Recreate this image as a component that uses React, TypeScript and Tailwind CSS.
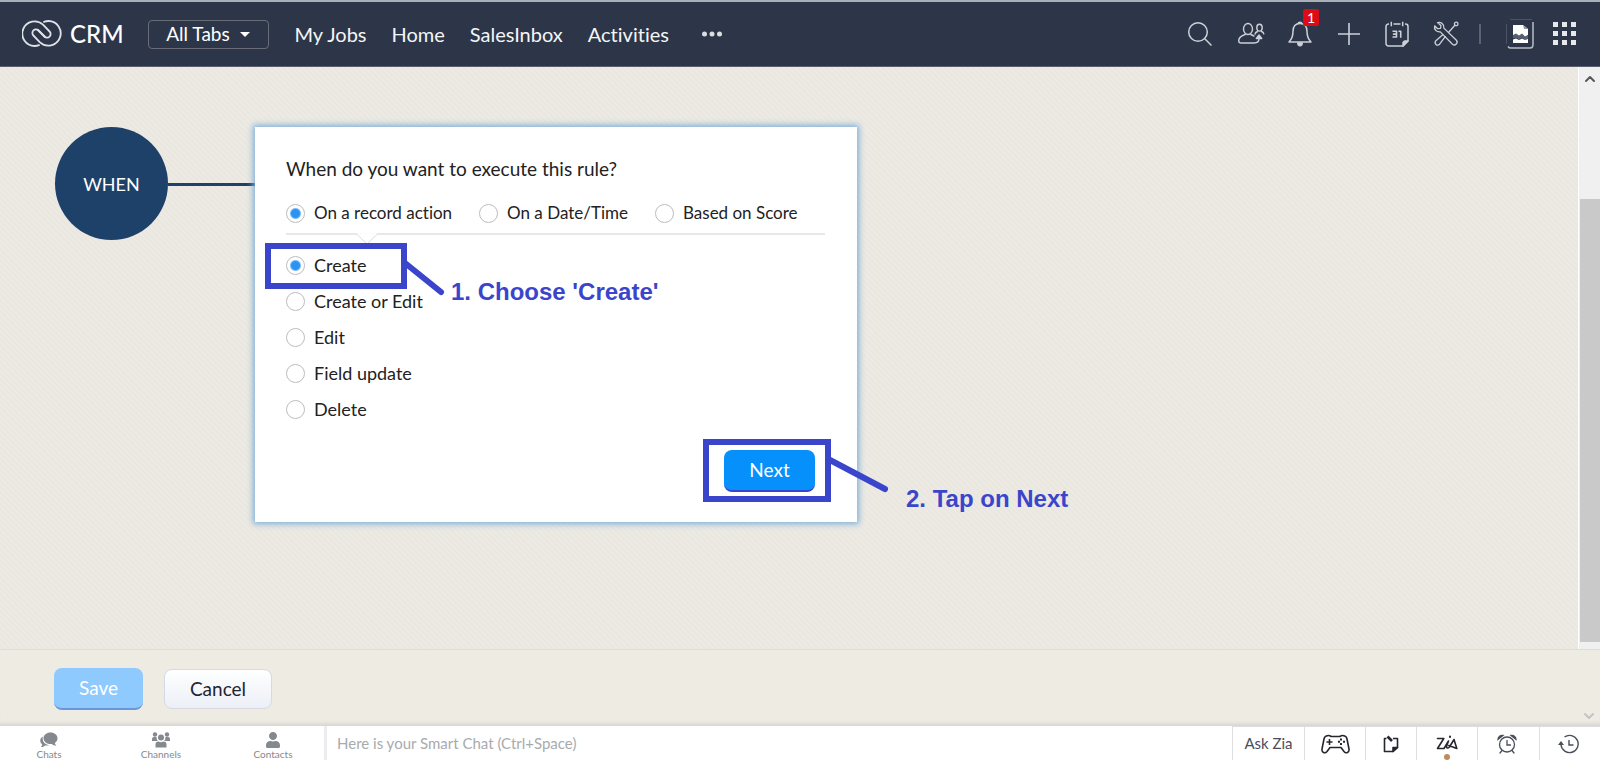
import React, { useState } from 'react';
import { FaUser } from 'react-icons/fa';
import { ChevronDown, ChevronUp } from 'lucide-react';

const NAV_LINKS = ['My Jobs', 'Home', 'SalesInbox', 'Activities'];
const TRIGGERS = ['On a record action', 'On a Date/Time', 'Based on Score'];
const ACTIONS = ['Create', 'Create or Edit', 'Edit', 'Field update', 'Delete'];

interface RadioProps {
  name: string;
  label: string;
  checked: boolean;
  onChange: () => void;
}

const Radio: React.FC<RadioProps> = ({ name, label, checked, onChange }) => (
  <label className="flex h-6 items-center gap-[9px] whitespace-nowrap text-[#222]">
    <input
      type="radio"
      name={name}
      checked={checked}
      onChange={onChange}
      className="size-[19px] shrink-0 appearance-none rounded-full border border-[#bdbdbd] bg-white checked:bg-[radial-gradient(circle,#2a94f4_0_4px,#7fbff8_5px,transparent_6px)]"
    />
    {label}
  </label>
);

const Logo = () => (
  <svg width="40" height="28" viewBox="0 0 40 28" fill="none" stroke="#dfe1e6" strokeWidth="1.8" strokeLinecap="round">
    <path d="M17 25.200C15.500 25.800 14 26 12.500 26A12.300 12.300 0 1 1 21 4.700L27.600 11.500A3.500 3.500 0 0 1 22.500 16.500L16 10" />
    <path d="M17 25.200C15.500 25.800 14 26 12.500 26A12.300 12.300 0 1 1 21 4.700L27.600 11.500A3.500 3.500 0 0 1 22.500 16.500L16 10" transform="rotate(180 19.500 13.500)" />
  </svg>
);

const SearchIcon = () => (
  <svg width="26" height="26" viewBox="0 0 26 26" fill="none" stroke="currentColor" strokeWidth="1.500">
    <circle cx="11" cy="11" r="9.300" />
    <path d="M17.800 17.800L24.500 24.500" />
  </svg>
);

const PeopleIcon = () => (
  <svg width="28" height="24" viewBox="0 0 28 24" fill="none" stroke="currentColor" strokeWidth="1.400" strokeLinecap="round" strokeLinejoin="round">
    <ellipse cx="11" cy="7" rx="4.500" ry="5.500" />
    <path d="M8.200 12.500c-4 1.200-6.300 2.600-6.500 6.200 0 1.500 1 2.300 2.500 2.300h13c2.500 0 4.800-1.500 4.800-4.500M13.800 12.500l3.200 1.500" />
    <ellipse cx="22.500" cy="5.700" rx="2.700" ry="3.400" />
    <path d="M20.500 9.500c-1.500.6-2.300 1.400-2.500 2.600M24.500 9.500c1.200.4 2 .9 2.300 2.300" />
    <path d="M19.300 16.500l2.700-3.500 2.700 3.500z" fill="currentColor" />
  </svg>
);

const BellIcon = () => (
  <svg width="26" height="26" viewBox="0 0 26 26" fill="none" stroke="currentColor" strokeWidth="1.500" strokeLinejoin="round">
    <path d="M13 2.500c-4.700 0-7 3.500-7 8 0 5.500-1.500 8-4 10.500h22c-2.500-2.500-4-5-4-10.500 0-4.500-2.300-8-7-8z" />
    <path d="M11.200 2.800c0-2 3.600-2 3.600 0" />
    <path d="M10.800 22h4.400c0 3.500-4.400 3.500-4.400 0z" fill="currentColor" />
  </svg>
);

const PlusIcon = () => (
  <svg width="24" height="24" viewBox="0 0 24 24" stroke="currentColor" strokeWidth="1.600">
    <path d="M1 12h22M12 1v22" />
  </svg>
);

const CalendarIcon = () => (
  <svg width="24" height="26" viewBox="0 0 24 26" fill="none" stroke="currentColor" strokeWidth="1.500" strokeLinejoin="round">
    <path d="M4 3H3.500A2.500 2.500 0 0 0 1 5.500v17A2.500 2.500 0 0 0 3.500 25H18l5-5V5.500A2.500 2.500 0 0 0 20.500 3H20M8.500 3h7M6.300.8v4.400M17.700.8v4.400" />
    <path d="M18 25v-3.500l1.500-1.500H23z" fill="currentColor" />
    <path d="M7.500 10.300h4v2.800H8.500h3v2.900h-4M13.500 10.300h2.200v6.500" strokeWidth="1.600" />
  </svg>
);

const ToolsIcon = () => (
  <svg width="26" height="26" viewBox="0 0 26 26" fill="none" stroke="currentColor" strokeWidth="1.300" strokeLinejoin="round" strokeLinecap="round">
    <path d="M4.500 1.600c3.400-1 6.900 1.400 6.400 5.500l12.500 12.200c2.200 2.500-1.300 6.100-3.900 3.900L7.300 10.900C3.500 11.400.8 8.300 1.600 4.800l3 2.900 2.900-.4.500-2.800z" />
    <path d="M12.200 15.600l-5.600 7.600c-2.400 2.600-6-.8-3.700-3.500l6.800-6M15.500 11.500l6.400-7.200" />
    <circle cx="23.200" cy="3" r="1.800" />
  </svg>
);

const AvatarIcon = () => (
  <svg width="32" height="32" viewBox="0 0 32 32" fill="none">
    <path d="M5 1.500h22M1.500 6v20" stroke="#4b5364" />
    <path d="M3 28.500q1 1.500 3 1.500h19q3 0 3-3.500V4" stroke="#b9bdc5" strokeWidth="1.500" />
    <path d="M8 7h10l5 4v6l-3 2-3-3-3 3-3-2-3 1z" fill="#fff" />
    <path d="M18 7l1 4h4z" fill="#8e95a3" />
    <path d="M8 17l3-1.500 3 2 3-2 3 3 3-1.500v4l-3 1-3-2.500-3 2-3-2-3 1z" fill="#59606e" />
    <path d="M8 21.500l3-1 3 1.500 3-1.500 3 1.500 3-1V25H8z" fill="#fff" />
  </svg>
);

const AppsIcon = () => (
  <svg width="24" height="24" viewBox="0 0 24 24" fill="#e6e8eb">
    {[0, 9, 18].map(y => [0, 9, 18].map(x => <rect key={`${x}-${y}`} x={x} y={y} width="5" height="5" />))}
  </svg>
);

const ChatsIcon = () => (
  <svg width="18" height="16" viewBox="0 0 18 16" fill="currentColor">
    <path d="M10.500.5c4 0 7 2.500 7 5.800 0 2-1 3.700-2.700 4.700.2 1.200.8 2 1.700 2.800-2 0-3.500-.6-4.600-1.700-4.800.3-8.400-2.200-8.400-5.800C3.500 3 6.500.5 10.500.5z" />
    <path d="M2.700 4.500C.9 5.800 0 7.300.3 9.200c.2 1.300.9 2.300 1.900 3-.1 1.200-.5 2-1.200 2.800 1.700 0 3-.6 3.900-1.600 1.800.4 3.600.2 5-.3C5.500 13 2 10.200 2.700 4.500z" />
  </svg>
);

const ChannelsIcon = () => (
  <svg width="18" height="16" viewBox="0 0 18 16" fill="currentColor">
    <circle cx="3" cy="2.500" r="2.200" />
    <circle cx="15" cy="2.500" r="2.200" />
    <circle cx="9" cy="5.500" r="3" />
    <path d="M0 9V7q0-2 2-2h2.500q0 3 1.500 4zM18 9V7q0-2-2-2h-2.500q0 3-1.500 4zM3.500 15.500v-3q0-3 3-3 2.500 1.300 5 0 3 0 3 3v3z" />
  </svg>
);

const GamepadIcon = () => (
  <svg width="29" height="20" viewBox="0 0 29 20" fill="none" stroke="#26262e" strokeWidth="1.600" strokeLinejoin="round">
    <path d="M8 1.500c-3 0-4.500 1-5 3.500L1 15c-.5 3.500 3 5 5 2.500l3-4h11l3 4c2 2.500 5.500 1 5-2.500L26 5c-.5-2.500-2-3.500-5-3.500-1 0-1.500 1-2.500 1h-8c-1 0-1.500-1-2.500-1z" />
    <path d="M5.500 8h6M8.500 5v6" />
    <path d="M20 4.500v2M20 9v2M17 7.700h2M22 7.700h2" strokeWidth="2" />
  </svg>
);

const NoteIcon = () => (
  <svg width="16" height="18" viewBox="0 0 16 18" fill="none" stroke="#26262e" strokeWidth="1.600" strokeLinejoin="round">
    <path d="M3.500 3.500H1.500v13h8.500l4.500-4v-9H10" />
    <path d="M10 16.500v-4h4.500z" fill="#26262e" />
    <path d="M4.500 1.500L9 6" strokeWidth="2.600" />
  </svg>
);

const ZiaIcon = () => (
  <svg width="22" height="17" viewBox="0 0 22 17" fill="none" stroke="#26262e" strokeWidth="1.600" strokeLinecap="round" strokeLinejoin="round">
    <path d="M1.500 3.500h6.300L1.500 13.500h6.500L12.500 6l-2 5.500c0 2 1.500 2 3 .5l4.500-7.500 2.800 9-8-3" />
    <path d="M14 1.500v.5" strokeWidth="2" />
  </svg>
);

const AlarmIcon = () => (
  <svg width="20" height="20" viewBox="0 0 20 20" fill="none" stroke="#4a4e5a" strokeWidth="1.300" strokeLinecap="round">
    <circle cx="10" cy="10.500" r="7.500" />
    <path d="M10 6.500V11h3.500M5 16.500l-2 2.500M15 16.500l2 2.500" />
    <path d="M1 5.500C1 3 3 1 6 1.500zM19 5.500C19 3 17 1 14 1.500z" fill="#4a4e5a" />
  </svg>
);

const HistoryIcon = () => (
  <svg width="21" height="20" viewBox="0 0 21 20" fill="none" stroke="#4a4e5a" strokeWidth="1.400">
    <path d="M6.500 3A8.600 8.600 0 1 1 3 11" />
    <path d="M11 6v5h4.500" />
    <path d="M0 11l3-4 3 4z" fill="#4a4e5a" stroke="none" />
  </svg>
);

const CHAT_TABS = [
  { label: 'Chats', icon: <ChatsIcon /> },
  { label: 'Channels', icon: <ChannelsIcon /> },
  { label: 'Contacts', icon: <FaUser size={16} /> },
];

const TopBar = () => (
  <header className="flex h-[67px] shrink-0 items-center border-t-2 border-b border-t-[#a9b0ba] border-b-[#5c5f6c] bg-[#2d3648] pl-[22px] pr-[23px] text-[#cdd0d6]">
    <a href="#" className="flex items-center gap-2 text-2xl font-medium text-white">
      <Logo />
      CRM
    </a>
    <button className="ml-6 flex h-[29px] w-[121px] items-center justify-center gap-[10px] rounded border border-[#6a6d78] text-[19px] text-white">
      All Tabs
      <svg width="10" height="5" viewBox="0 0 10 5" fill="currentColor"><path d="M0 0h10L5 5z" /></svg>
    </button>
    <nav className="ml-[26px] flex items-center gap-[25px] text-xl text-[#f4f5f7]">
      {NAV_LINKS.map(link => <a key={link} href="#">{link}</a>)}
      <button aria-label="More tabs" className="ml-2">
        <svg width="20" height="6" viewBox="0 0 20 6" fill="#dcdee2">
          <circle cx="2.500" cy="3" r="2.500" />
          <circle cx="10" cy="3" r="2.500" />
          <circle cx="17.500" cy="3" r="2.500" />
        </svg>
      </button>
    </nav>
    <div className="ml-auto flex items-center">
      <button aria-label="Search"><SearchIcon /></button>
      <button aria-label="Users" className="ml-6"><PeopleIcon /></button>
      <button aria-label="Notifications" className="relative ml-[22px]">
        <BellIcon />
        <span className="absolute -top-3 left-4 flex h-[17px] w-4 items-center justify-center rounded-xs bg-[#dd0a17] text-sm text-white">1</span>
      </button>
      <button aria-label="Add" className="ml-6"><PlusIcon /></button>
      <button aria-label="Calendar" className="ml-6"><CalendarIcon /></button>
      <button aria-label="Setup" className="ml-6"><ToolsIcon /></button>
      <span className="ml-5 h-5 w-[2px] bg-[#5d6371]" />
      <button aria-label="Profile" className="ml-6"><AvatarIcon /></button>
      <button aria-label="Apps" className="ml-4"><AppsIcon /></button>
    </div>
  </header>
);

const RuleCard = () => {
  const [trigger, setTrigger] = useState(TRIGGERS[0]);
  const [action, setAction] = useState(ACTIONS[0]);

  return (
    <section className="relative h-[395px] w-[602px] bg-white px-[31px] pt-7 shadow-[0_0_6px_2px_#7fb0d8]">
      <h1 className="text-[19px] leading-7 text-[#222]">When do you want to execute this rule?</h1>
      <div className="mt-[18px] flex gap-[27px] text-[17px]">
        {TRIGGERS.map(t => (
          <Radio key={t} name="trigger" label={t} checked={trigger === t} onChange={() => setTrigger(t)} />
        ))}
      </div>
      <div className="relative mt-2 h-[2px] w-[539px] bg-[#e8e8e8]">
        <svg className="absolute left-[70px] top-0" width="22" height="12" viewBox="0 0 22 12" fill="#fff" stroke="#dcdcdc">
          <path d="M0 .5L11 11 22 .5" />
          <path d="M1 0h20" stroke="#fff" />
        </svg>
      </div>
      <div className="mt-[18px] flex flex-col gap-3 text-lg">
        {ACTIONS.map(a => (
          <Radio key={a} name="action" label={a} checked={action === a} onChange={() => setAction(a)} />
        ))}
      </div>
      <div className="mt-[29px] flex justify-end pr-[11px]">
        <button className="h-[42px] w-[91px] rounded-lg border-b-2 border-[#3b45cc] bg-[#0590fc] text-[19px] text-white">Next</button>
      </div>

      {/* Step callouts drawn over the card */}
      <div className="absolute left-[10px] top-[116px] h-[46px] w-[142px] border-6 border-[#3b45cc]" />
      <svg className="absolute left-[148px] top-[132px]" width="42" height="38" viewBox="0 0 42 38">
        <path d="M2 4L38 33" stroke="#3b45cc" strokeWidth="6" strokeLinecap="round" />
      </svg>
      <p className="absolute left-[196px] top-[149px] whitespace-nowrap font-['Liberation_Sans',sans-serif] text-2xl font-bold text-[#3b45cc]">1. Choose 'Create'</p>
      <div className="absolute left-[448px] top-[312px] h-[63px] w-[128px] border-6 border-[#3b45cc]" />
      <svg className="absolute left-[572px] top-[328px]" width="64" height="40" viewBox="0 0 64 40">
        <path d="M3 5L58 34" stroke="#3b45cc" strokeWidth="6" strokeLinecap="round" />
      </svg>
      <p className="absolute left-[651px] top-[356px] whitespace-nowrap font-['Liberation_Sans',sans-serif] text-2xl font-bold text-[#3b45cc]">2. Tap on Next</p>
    </section>
  );
};

const ChatBar = () => (
  <footer className="flex h-[34px] shrink-0 bg-white">
    <div className="flex w-[327px] shrink-0 gap-[14px] border-r-3 border-[#ebebf0] text-[#85888e]">
      {CHAT_TABS.map(({ label, icon }) => (
        <button key={label} className="flex w-[98px] flex-col items-center pt-[6px] text-[10px] leading-3">
          <span className="flex h-[17px] items-center">{icon}</span>
          {label}
        </button>
      ))}
    </div>
    <input
      aria-label="Smart Chat"
      placeholder="Here is your Smart Chat (Ctrl+Space)"
      className="min-w-0 flex-1 px-[10px] text-[15px] outline-none placeholder:text-[#a8abae]"
    />
    <div className="flex shrink-0 divide-x divide-[#dedee2] border-l border-t border-[#dedee2]">
      <button className="w-[72px] text-[15px] text-[#4a4d57]">Ask Zia</button>
      <button aria-label="Games" className="flex w-[61px] items-center justify-center"><GamepadIcon /></button>
      <button aria-label="Notes" className="flex w-[51px] items-center justify-center"><NoteIcon /></button>
      <button aria-label="Zia" className="relative flex w-[61px] items-center justify-center">
        <ZiaIcon />
        <span className="absolute bottom-0 size-[6px] rounded-full bg-[#c08c5e]" />
      </button>
      <button aria-label="Reminders" className="flex w-[62px] items-center justify-center pr-1"><AlarmIcon /></button>
      <button aria-label="Recent items" className="flex w-[60px] items-center justify-center pr-1"><HistoryIcon /></button>
    </div>
  </footer>
);

export default function App() {
  return (
    <div className="flex min-h-screen flex-col bg-[#ece9e2] font-['Lato',sans-serif] [font-variant-ligatures:none]">
      <TopBar />
      <div className="flex flex-1">
        <main className="flex min-w-0 flex-1 items-start bg-[repeating-linear-gradient(45deg,#edeae4_0_2px,#eae7e0_2px_4px)] pl-[55px] pt-[60px]">
          <div className="flex size-[113px] shrink-0 items-center justify-center rounded-full bg-[#1d4168] text-lg text-white">WHEN</div>
          <div className="mt-14 h-[3px] w-[87px] shrink-0 bg-[#1d4168]" />
          <RuleCard />
        </main>
        <div className="flex w-[22px] shrink-0 flex-col items-center border-l border-white bg-[#f0f0f0]">
          <ChevronUp size={16} strokeWidth={3} className="mt-1 text-[#55585f]" />
          <div className="mt-28 h-[443px] w-5 bg-[#c9c9c9]" />
        </div>
      </div>
      <div className="flex h-[77px] shrink-0 items-center gap-[21px] border-t border-[#dedcd8] bg-[#eeebe3] pl-[54px] pt-[2px] shadow-[inset_0_-5px_4px_-3px_#d3d2cd]">
        <button className="h-[42px] w-[89px] rounded-lg border-b-2 border-[#6a97dc] bg-[#8fcaff] text-[19px] text-white">Save</button>
        <button className="h-[40px] w-[108px] rounded-lg border border-[#d5dae4] bg-linear-to-b from-white to-[#eceff6] text-[19px] text-[#222433]">Cancel</button>
        <ChevronDown size={16} strokeWidth={3} className="mb-[2px] ml-auto mr-[3px] self-end text-[#c4c4c4]" />
      </div>
      <ChatBar />
    </div>
  );
}
